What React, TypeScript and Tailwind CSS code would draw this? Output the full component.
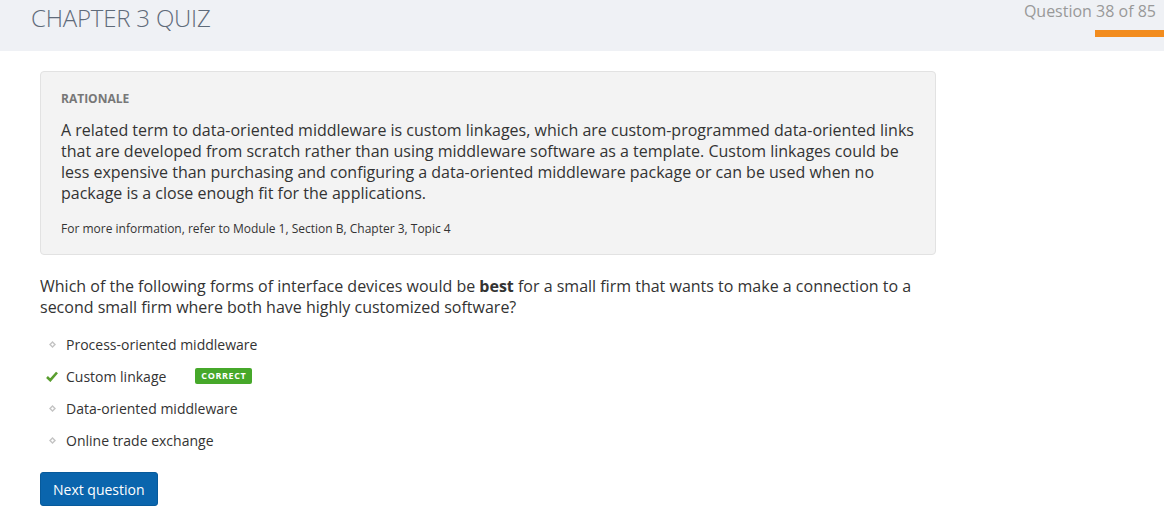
export default function App() {
  const options = [
    { label: 'Process-oriented middleware', correct: false },
    { label: 'Custom linkage', correct: true },
    { label: 'Data-oriented middleware', correct: false },
    { label: 'Online trade exchange', correct: false },
  ]

  return (
    <div className="min-h-[526px] bg-white" style={{ fontFamily: '"Open Sans", "Liberation Sans", sans-serif' }}>
      {/* Header */}
      <header className="h-[51px] bg-[#eff1f5] flex justify-between">
        <h1 className="pl-[31px] pt-[1px] text-[24px] font-light text-[#5f6b7a] leading-[34px] tracking-[-0.2px]">
          CHAPTER 3 QUIZ
        </h1>
        <div className="flex flex-col items-end">
          <span className="pr-[8px] text-[16px] text-[#999] leading-[22px]">Question 38 of 85</span>
          <div className="mt-[8px] w-[69px] h-[7px] bg-[#f28c1e]" />
        </div>
      </header>

      <main className="px-[40px] pt-[20px] w-[976px]">
        {/* Rationale */}
        <section className="bg-[#f3f3f3] border border-[#e2e2e2] rounded-[4px] px-[20px] pt-[18px] pb-[16px] text-[#333]">
          <h2 className="text-[12px] font-bold text-[#777] leading-[18px]">RATIONALE</h2>
          <p className="mt-[12px] text-[16px] leading-[21px]">
            A related term to data-oriented middleware is custom linkages, which are custom-programmed data-oriented links that are developed from scratch rather than using middleware software as a template. Custom linkages could be less expensive than purchasing and configuring a data-oriented middleware package or can be used when no package is a close enough fit for the applications.
          </p>
          <p className="mt-[16px] text-[12px] leading-[18px]">
            For more information, refer to Module 1, Section B, Chapter 3, Topic 4
          </p>
        </section>

        {/* Question */}
        <p className="mt-[21px] text-[16px] leading-[21px] text-[#333]">
          Which of the following forms of interface devices would be <strong className="font-bold">best</strong> for a small firm that wants to make a connection to a second small firm where both have highly customized software?
        </p>

        <ul className="mt-[10px] flex flex-col">
          {options.map((o) => (
            <li key={o.label} className="h-[32px] flex items-center text-[14px] text-[#333]">
              <span className="w-[26px] flex justify-center pr-[2px]">
                {o.correct ? (
                  <svg width="12" height="11" viewBox="0 0 12 11">
                    <path d="M1 6 L4.3 9.2 L11 1.5" fill="none" stroke="#5a9e2f" strokeWidth="2.6" />
                  </svg>
                ) : (
                  <svg width="7" height="7" viewBox="0 0 7 7">
                    <path d="M3.5 0 L7 3.5 L3.5 7 L0 3.5 Z M3.5 2 L2 3.5 L3.5 5 L5 3.5 Z" fill="#c4c4c4" fillRule="evenodd" />
                  </svg>
                )}
              </span>
              <span>{o.label}</span>
              {o.correct && (
                <span className="ml-[29px] h-[16px] w-[57px] flex items-center justify-center rounded-[2px] bg-[#46a82a] text-white text-[9px] font-bold tracking-[0.6px]">
                  CORRECT
                </span>
              )}
            </li>
          ))}
        </ul>

        <button className="mt-[16px] h-[34px] px-[12px] rounded-[3px] bg-[#0a65ad] border border-[#075a9b] text-white text-[14px]">
          Next question
        </button>
      </main>
    </div>
  )
}
